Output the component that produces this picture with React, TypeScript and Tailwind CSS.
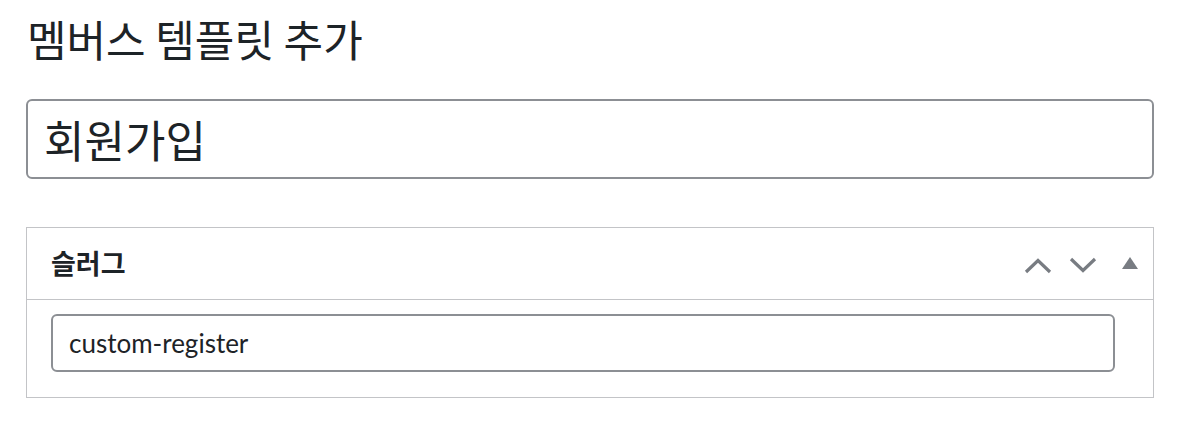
const App = () => {
  return (
    <div className="min-h-[422px] w-[1182px] bg-white px-[26px] pt-[9px] text-[#1d2327] font-['Lato','Noto_Sans_CJK_KR',sans-serif]">
      <h1 className="h-[58px] pl-[1px] text-[43px] leading-[58px] font-normal font-['Noto_Sans_CJK_KR',sans-serif]">
        멤버스 템플릿 추가
      </h1>

      <div className="mt-[32px] flex h-[80px] w-[1128px] items-center rounded-[6px] border-2 border-[#8c8f94] px-[16px]">
        <span className="text-[44px] leading-none font-['Noto_Sans_CJK_KR',sans-serif]">회원가입</span>
      </div>

      <div className="mt-[48px] w-[1128px] border-[1.5px] border-[#c3c4c7]">
        <div className="flex h-[72px] items-center justify-between border-b-[1.5px] border-[#c3c4c7] pl-[24px] pr-[15px]">
          <h2 className="text-[27px] font-bold font-['Noto_Sans_CJK_KR',sans-serif]">슬러그</h2>
          <div className="flex items-center pt-[4px]">
            <svg width="28" height="17" viewBox="0 0 28 17">
              <polyline points="2,15 14,3.5 26,15" fill="none" stroke="#787c82" strokeWidth="3.2" />
            </svg>
            <svg width="28" height="17" viewBox="0 0 28 17" className="ml-[17px]">
              <polyline points="2,2 14,13.5 26,2" fill="none" stroke="#787c82" strokeWidth="3.2" />
            </svg>
            <svg width="16" height="13" viewBox="0 0 16 13" className="ml-[25px] -mt-[4px]">
              <polygon points="8,0 16,12 0,12" fill="#787c82" />
            </svg>
          </div>
        </div>
        <div className="px-[24px] pb-[25px] pt-[14px]">
          <div className="flex h-[58px] w-[1064px] items-center rounded-[6px] border-2 border-[#8c8f94] px-[16px]">
            <span className="text-[26px] font-['Lato',sans-serif]">custom-register</span>
          </div>
        </div>
      </div>
    </div>
  )
}

export default App
